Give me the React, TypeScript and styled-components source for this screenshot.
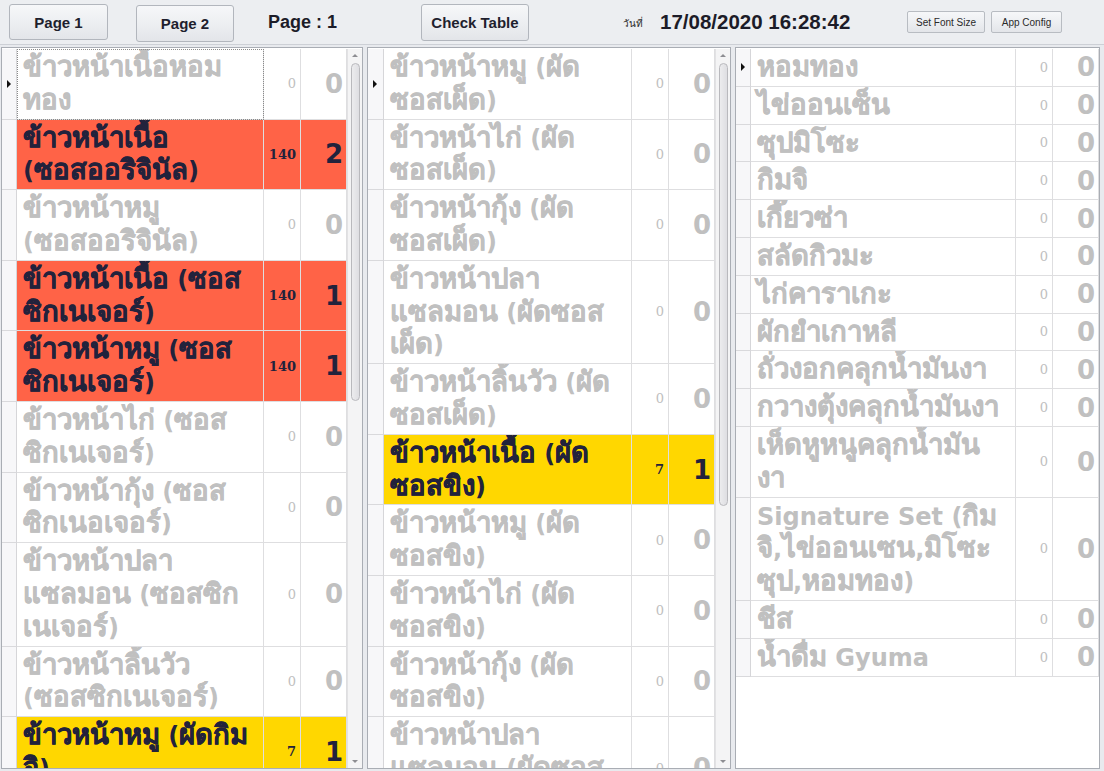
import React from 'react';
import styled, { createGlobalStyle, css } from 'styled-components';

const GlobalStyle = createGlobalStyle`
  html, body {
    margin: 0;
    padding: 0;
    background: #e8eaee;
    overflow: hidden;
  }
  * {
    box-sizing: border-box;
  }
`;

const Screen = styled.div`
  width: 1104px;
  height: 771px;
  display: flex;
  flex-direction: column;
  background: #e8eaee;
  font-family: 'Liberation Sans', Arial, sans-serif;
`;

const TopBar = styled.div`
  height: 45px;
  flex: none;
  display: flex;
  align-items: center;
  background: #eceef1;
  border-bottom: 1px solid #cdd0d6;
`;

const ToolButton = styled.button<{ $w: number; $h: number; $ml: number; $dy?: number; $small?: boolean }>`
  width: ${p => p.$w}px;
  height: ${p => p.$h}px;
  margin-left: ${p => p.$ml}px;
  margin-top: ${p => (p.$dy || 0) * 2}px;
  flex: none;
  padding: 0;
  border: 1px solid #b2b6bd;
  border-radius: 3px;
  background: linear-gradient(180deg, #f6f7f9 0%, #eceef1 55%, #e3e5e9 100%);
  color: #1f1f2e;
  font-family: 'Liberation Sans', Arial, sans-serif;
  font-size: 15px;
  font-weight: bold;
  cursor: pointer;

  ${p =>
    p.$small &&
    css`
      font-size: 10px;
      font-weight: normal;
      color: #2a2a2a;
      border-color: #b8bcc2;
      border-radius: 2px;
    `}
`;

const PageLabel = styled.div`
  width: 80px;
  margin-left: 34px;
  flex: none;
  font-size: 18px;
  font-weight: bold;
  color: #1c1c28;
`;

const DateCaption = styled.div`
  width: 30px;
  margin-left: 94px;
  margin-top: 2px;
  flex: none;
  font-size: 10px;
  color: #2a2a2a;
`;

const DateValue = styled.div`
  width: 200px;
  margin-left: 7px;
  flex: none;
  font-size: 20.5px;
  font-weight: bold;
  color: #1c1c28;
`;

const Board = styled.div`
  flex: 1;
  display: grid;
  grid-template-columns: 362px 364px 365px;
  gap: 4px;
  padding: 2px 0 2px 1px;
  min-height: 0;
`;

const Panel = styled.div`
  display: flex;
  min-height: 0;
  padding-top: 1px;
  background: #ffffff;
  border: 1px solid #a9adb4;
  overflow: hidden;
`;

const Rows = styled.div`
  flex: 1;
  min-width: 0;
  overflow: hidden;
`;

const Row = styled.div<{ $head: number }>`
  display: grid;
  grid-template-columns: ${p => p.$head}px 1fr 37px 46px;
`;

const tones = {
  idle: { bg: '#ffffff', fg: '#c0c0c0' },
  hot: { bg: '#ff6347', fg: '#22223c' },
  warm: { bg: '#ffd700', fg: '#22223c' },
};

type Tone = keyof typeof tones;

const HeadCell = styled.div`
  position: relative;
  background: #f7f7f9;
  border-right: 1px solid #d6d6d9;
  border-bottom: 1px solid #d9d9dc;
`;

const Pointer = styled.span`
  position: absolute;
  left: 5px;
  top: 50%;
  margin-top: -4px;
  width: 0;
  height: 0;
  border-top: 4px solid transparent;
  border-bottom: 4px solid transparent;
  border-left: 4px solid #111111;
`;

const Cell = styled.div<{ $tone: Tone }>`
  display: flex;
  align-items: center;
  background: ${p => tones[p.$tone].bg};
  color: ${p => tones[p.$tone].fg};
  border-right: 1px solid #dedee0;
  border-bottom: 1px solid #dedee0;
`;

const NameCell = styled(Cell)<{ $focus?: boolean }>`
  padding: 3px 4px 1px 6px;
  font-family: 'DejaVu Sans', 'Noto Sans', sans-serif;
  font-size: 24px;
  font-weight: bold;
  line-height: 32.8px;
  white-space: nowrap;
  overflow: hidden;
  ${p =>
    p.$focus &&
    css`
      outline: 1px dotted #8a8a8a;
      outline-offset: -1px;
    `}
`;

const ThaiRun = styled.span`
  font-size: 27.5px;
  line-height: 1;
  -webkit-text-stroke: 0.45px currentColor;
`;

const QtyCell = styled(Cell)`
  justify-content: flex-end;
  padding-right: 4px;
  font-family: 'DejaVu Serif', 'Liberation Serif', serif;
  font-size: 13px;
  font-weight: ${p => (p.$tone === 'idle' ? 'normal' : 'bold')};
`;

const CountCell = styled(Cell)`
  justify-content: flex-end;
  padding-right: 3px;
  font-family: 'DejaVu Sans', sans-serif;
  font-size: 26px;
  font-weight: bold;
`;

const ScrollBar = styled.div`
  width: 15px;
  flex: none;
  display: flex;
  flex-direction: column;
  align-items: center;
  background: #f4f4f5;
  border-left: 1px solid #e2e2e4;
`;

const Arrow = styled.span<{ $down?: boolean }>`
  flex: none;
  width: 0;
  height: 0;
  margin: ${p => (p.$down ? '6px 0 5px' : '5px 0 6px')};
  border-left: 3px solid transparent;
  border-right: 3px solid transparent;
  ${p =>
    p.$down
      ? css`
          border-top: 3px solid #8d8d92;
        `
      : css`
          border-bottom: 3px solid #8d8d92;
        `}
`;

const Track = styled.div`
  flex: 1;
  width: 100%;
  display: flex;
  justify-content: center;
`;

const Thumb = styled.div`
  width: 9px;
  border: 1px solid #b9b9bd;
  border-radius: 5px;
  background: linear-gradient(90deg, #ececee, #dedee2);
`;

type Item = { lines: string[]; qty: number; count: number; tone?: Tone };

const leftItems: Item[] = [
  { lines: ['ข้าวหน้าเนื้อหอม', 'ทอง'], qty: 0, count: 0 },
  { lines: ['ข้าวหน้าเนื้อ', '(ซอสออริจินัล)'], qty: 140, count: 2, tone: 'hot' },
  { lines: ['ข้าวหน้าหมู', '(ซอสออริจินัล)'], qty: 0, count: 0 },
  { lines: ['ข้าวหน้าเนื้อ (ซอส', 'ซิกเนเจอร์)'], qty: 140, count: 1, tone: 'hot' },
  { lines: ['ข้าวหน้าหมู (ซอส', 'ซิกเนเจอร์)'], qty: 140, count: 1, tone: 'hot' },
  { lines: ['ข้าวหน้าไก่ (ซอส', 'ซิกเนเจอร์)'], qty: 0, count: 0 },
  { lines: ['ข้าวหน้ากุ้ง (ซอส', 'ซิกเนอเจอร์)'], qty: 0, count: 0 },
  { lines: ['ข้าวหน้าปลา', 'แซลมอน (ซอสซิก', 'เนเจอร์)'], qty: 0, count: 0 },
  { lines: ['ข้าวหน้าลิ้นวัว', '(ซอสซิกเนเจอร์)'], qty: 0, count: 0 },
  { lines: ['ข้าวหน้าหมู (ผัดกิม', 'จิ)'], qty: 7, count: 1, tone: 'warm' },
];

const middleItems: Item[] = [
  { lines: ['ข้าวหน้าหมู (ผัด', 'ซอสเผ็ด)'], qty: 0, count: 0 },
  { lines: ['ข้าวหน้าไก่ (ผัด', 'ซอสเผ็ด)'], qty: 0, count: 0 },
  { lines: ['ข้าวหน้ากุ้ง (ผัด', 'ซอสเผ็ด)'], qty: 0, count: 0 },
  { lines: ['ข้าวหน้าปลา', 'แซลมอน (ผัดซอส', 'เผ็ด)'], qty: 0, count: 0 },
  { lines: ['ข้าวหน้าลิ้นวัว (ผัด', 'ซอสเผ็ด)'], qty: 0, count: 0 },
  { lines: ['ข้าวหน้าเนื้อ (ผัด', 'ซอสขิง)'], qty: 7, count: 1, tone: 'warm' },
  { lines: ['ข้าวหน้าหมู (ผัด', 'ซอสขิง)'], qty: 0, count: 0 },
  { lines: ['ข้าวหน้าไก่ (ผัด', 'ซอสขิง)'], qty: 0, count: 0 },
  { lines: ['ข้าวหน้ากุ้ง (ผัด', 'ซอสขิง)'], qty: 0, count: 0 },
  { lines: ['ข้าวหน้าปลา', 'แซลมอน (ผัดซอส', 'ขิง)'], qty: 0, count: 0 },
];

const rightItems: Item[] = [
  { lines: ['หอมทอง'], qty: 0, count: 0 },
  { lines: ['ไข่ออนเซ็น'], qty: 0, count: 0 },
  { lines: ['ซุปมิโซะ'], qty: 0, count: 0 },
  { lines: ['กิมจิ'], qty: 0, count: 0 },
  { lines: ['เกี๊ยวซ่า'], qty: 0, count: 0 },
  { lines: ['สลัดกิวมะ'], qty: 0, count: 0 },
  { lines: ['ไก่คาราเกะ'], qty: 0, count: 0 },
  { lines: ['ผักยำเกาหลี'], qty: 0, count: 0 },
  { lines: ['ถั่วงอกคลุกน้ำมันงา'], qty: 0, count: 0 },
  { lines: ['กวางตุ้งคลุกน้ำมันงา'], qty: 0, count: 0 },
  { lines: ['เห็ดหูหนูคลุกน้ำมัน', 'งา'], qty: 0, count: 0 },
  { lines: ['Signature Set (กิม', 'จิ,ไข่ออนเซน,มิโซะ', 'ซุป,หอมทอง)'], qty: 0, count: 0 },
  { lines: ['ชีส'], qty: 0, count: 0 },
  { lines: ['น้ำดื่ม Gyuma'], qty: 0, count: 0 },
];

// Thai runs get a slightly larger size so they match the reference's Tahoma Thai
const renderLine = (line: string) =>
  line
    .split(/([\u0E00-\u0E7F]+)/)
    .filter(Boolean)
    .map((part, k) =>
      /[\u0E00-\u0E7F]/.test(part) ? <ThaiRun key={k}>{part}</ThaiRun> : <span key={k}>{part}</span>
    );

type GridProps = {
  items: Item[];
  head: number;
  focusFirst?: boolean;
  thumb?: number;
};

const MenuGrid: React.FC<GridProps> = ({ items, head, focusFirst, thumb }) => (
  <Panel>
    <Rows>
      {items.map((item, i) => {
        const tone = item.tone || 'idle';
        return (
          <Row key={i} $head={head}>
            <HeadCell>{i === 0 && <Pointer />}</HeadCell>
            <NameCell $tone={tone} $focus={focusFirst && i === 0}>
              <div>
                {item.lines.map((line, j) => (
                  <div key={j}>{renderLine(line)}</div>
                ))}
              </div>
            </NameCell>
            <QtyCell $tone={tone}>{item.qty}</QtyCell>
            <CountCell $tone={tone}>{item.count}</CountCell>
          </Row>
        );
      })}
    </Rows>
    {thumb !== undefined && (
      <ScrollBar>
        <Arrow />
        <Track>
          <Thumb style={{ height: `${thumb}px` }} />
        </Track>
        <Arrow $down />
      </ScrollBar>
    )}
  </Panel>
);

const App: React.FC = () => (
  <Screen>
    <GlobalStyle />
    <TopBar>
      <ToolButton $w={99} $h={36} $ml={9}>Page 1</ToolButton>
      <ToolButton $w={98} $h={37} $ml={28} $dy={1}>Page 2</ToolButton>
      <PageLabel>Page : 1</PageLabel>
      <ToolButton $w={108} $h={37} $ml={73}>Check Table</ToolButton>
      <DateCaption>วันที่</DateCaption>
      <DateValue>17/08/2020 16:28:42</DateValue>
      <ToolButton $w={78} $h={22} $ml={47} $small>Set Font Size</ToolButton>
      <ToolButton $w={71} $h={22} $ml={6} $small>App Config</ToolButton>
    </TopBar>
    <Board>
      <MenuGrid items={leftItems} head={15} focusFirst thumb={338} />
      <MenuGrid items={middleItems} head={16} thumb={443} />
      <MenuGrid items={rightItems} head={15} />
    </Board>
  </Screen>
);

export default App;
